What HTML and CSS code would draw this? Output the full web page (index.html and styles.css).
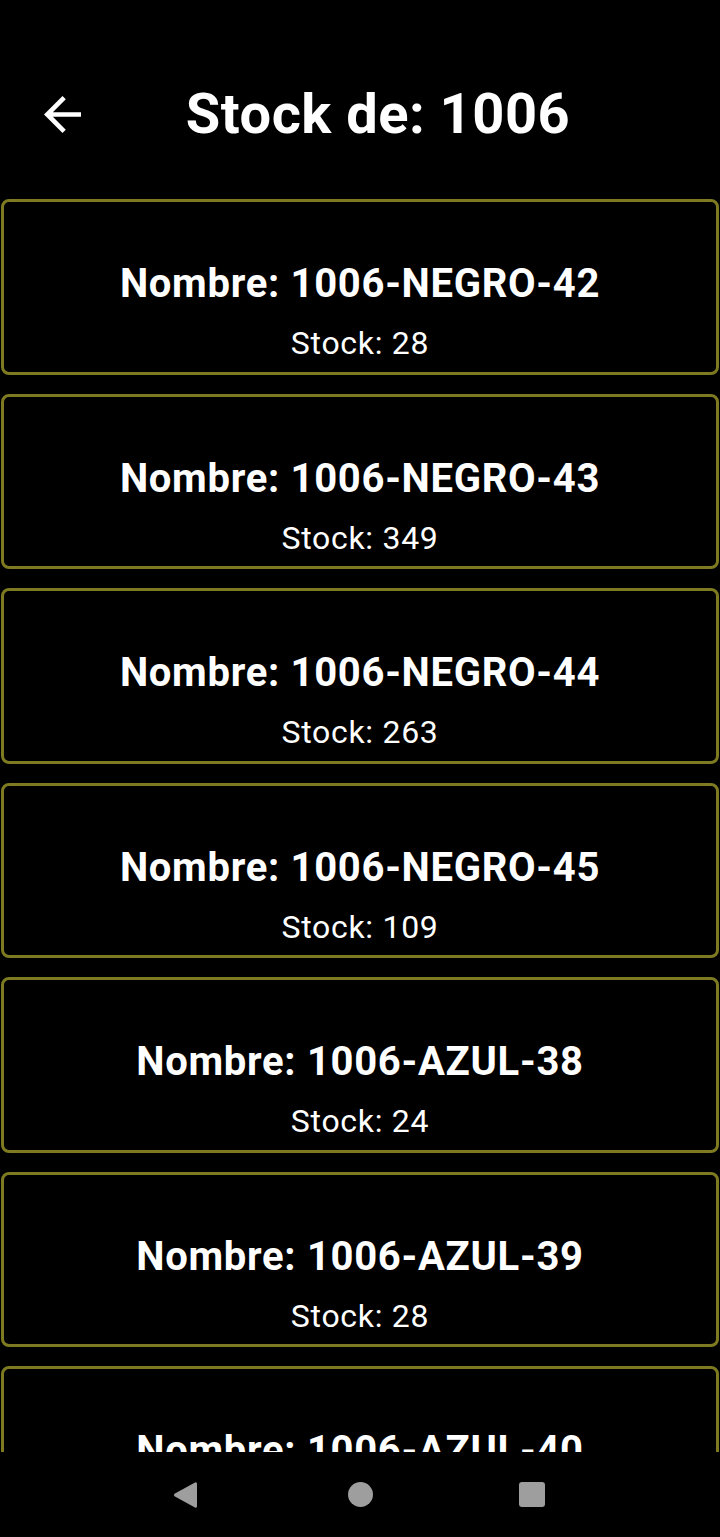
FILE: index.html
```html
<!DOCTYPE html>
<html lang="es">
<head>
<meta charset="utf-8">
<title>Stock de: 1006</title>
<link rel="stylesheet" href="styles.css">
</head>
<body>
<div class="screen">
  <header class="header">
    <svg class="back" viewBox="4 4 16 16" aria-hidden="true">
      <path d="M20 11H7.83l5.59-5.59L12 4l-8 8 8 8 1.41-1.41L7.83 13H20v-2z" fill="#fff"/>
    </svg>
    <h1 class="title">Stock de: 1006</h1>
  </header>
  <main class="list">
    <div class="card"><div class="name">Nombre: 1006-NEGRO-42</div><div class="stock">Stock: 28</div></div>
    <div class="card"><div class="name">Nombre: 1006-NEGRO-43</div><div class="stock">Stock: 349</div></div>
    <div class="card"><div class="name">Nombre: 1006-NEGRO-44</div><div class="stock">Stock: 263</div></div>
    <div class="card"><div class="name">Nombre: 1006-NEGRO-45</div><div class="stock">Stock: 109</div></div>
    <div class="card"><div class="name">Nombre: 1006-AZUL-38</div><div class="stock">Stock: 24</div></div>
    <div class="card"><div class="name">Nombre: 1006-AZUL-39</div><div class="stock">Stock: 28</div></div>
    <div class="card"><div class="name">Nombre: 1006-AZUL-40</div><div class="stock">Stock: 31</div></div>
  </main>
  <nav class="navbar">
    <svg class="nav-icon" width="24" height="28" viewBox="0 0 24 28" aria-hidden="true">
      <path d="M22 1.5 Q24 0.5 24 3 V25 Q24 27.5 22 26.5 L1.5 15.2 Q0 14 1.5 12.8 Z" fill="#9e9e9e"/>
    </svg>
    <span class="nav-circle"></span>
    <span class="nav-square"></span>
  </nav>
</div>
</body>
</html>
```

FILE: styles.css
```css
html, body {
  margin: 0;
  padding: 0;
  background: #000;
}

.screen {
  width: 720px;
  height: 1537px;
  display: flex;
  flex-direction: column;
  background: #000;
  color: #fff;
  font-family: Roboto, "Noto Sans", "Liberation Sans", sans-serif;
  overflow: hidden;
}

.header {
  display: flex;
  align-items: center;
  padding: 81px 0 52px;
  flex: none;
}

.back {
  width: 37px;
  height: 37px;
  margin-left: 44px;
  flex: none;
}

.title {
  flex: 1;
  margin: 0 54px 0 9px;
  text-align: center;
  font-size: 56px;
  line-height: 66px;
  font-weight: 700;
  letter-spacing: 0.5px;
}

.list {
  flex: 1;
  min-height: 0;
  overflow: hidden;
  display: flex;
  flex-direction: column;
  gap: 19px;
}

.card {
  flex: none;
  margin: 0 1px;
  height: 175.5px;
  box-sizing: border-box;
  border: 3px solid #7d7a22;
  border-radius: 8px;
  padding-top: 60px;
  text-align: center;
}

.name {
  font-size: 40px;
  line-height: 44px;
  font-weight: 700;
  letter-spacing: 0.7px;
}

.stock {
  margin-top: 19px;
  font-size: 32px;
  line-height: 36px;
  font-weight: 400;
  letter-spacing: 0.7px;
}

.navbar {
  flex: none;
  height: 85px;
  display: flex;
  align-items: center;
  justify-content: center;
  background: #000;
  padding-right: 2px;
}

.nav-icon {
  display: block;
}

.nav-circle {
  width: 25px;
  height: 25px;
  margin: 0 146px 0 151px;
  border-radius: 50%;
  background: #9e9e9e;
}

.nav-square {
  width: 26px;
  height: 25px;
  border-radius: 3px;
  background: #9e9e9e;
}
```
